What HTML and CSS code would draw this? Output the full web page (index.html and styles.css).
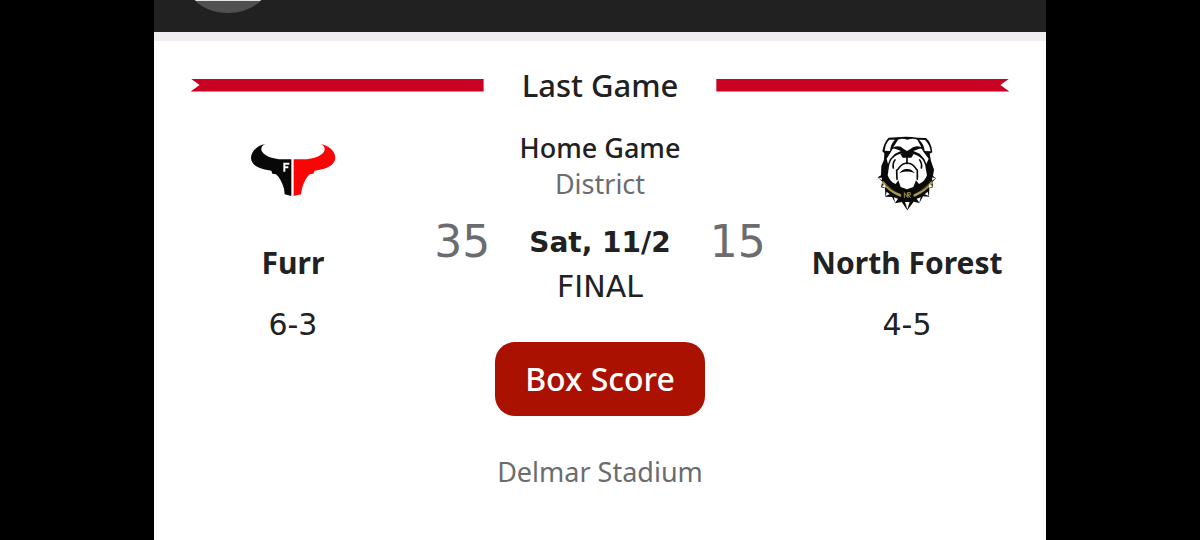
FILE: index.html
```html
<!DOCTYPE html>
<html lang="en">
<head>
<meta charset="utf-8">
<meta name="viewport" content="width=device-width, initial-scale=1">
<title>Last Game</title>
<link rel="stylesheet" href="styles.css">
</head>
<body>
<div class="screen">
  <header class="topbar">
    <svg class="avatar" viewBox="0 0 80 14" aria-hidden="true">
      <path d="M4 0Q18 13 38 13Q58 13 72 0Z" fill="#505050"/>
      <path d="M5 0H71L70 1H6Z" fill="#e4e6e6"/>
    </svg>
  </header>
  <main class="card">
    <div class="heading">
      <span class="ribbon ribbon-left"></span>
      <h1 class="title">Last Game</h1>
      <span class="ribbon ribbon-right"></span>
    </div>
    <div class="matchup">
      <section class="team">
        <svg class="logo" viewBox="0 0 330 285" role="img" aria-label="Furr logo">
          <g transform="translate(2 15)">
            <path d="M81 42C58 45 37 62 37 84C38 108 66 118 98 122L101 131L112 133C124 143 130 158 136 176L138 193L158 198V88H132C100 88 73 76 68 60C67 51 72 45 81 42Z" fill="#080808"/>
            <path d="M245 42C269 46 290 62 290 84C288 108 260 118 228 122L224 131L213 133C202 143 195 158 190 176L187 193L165 198V88H194C226 88 254 76 258 60C259 51 254 45 245 42Z" fill="#fa0505"/>
            <path d="M137 125V101H152M137 112H149" fill="none" stroke="#fff" stroke-width="6"/>
          </g>
        </svg>
        <h2 class="name">Furr</h2>
        <p class="record">6-3</p>
      </section>
      <section class="game">
        <p class="place">Home Game</p>
        <p class="kind">District</p>
        <div class="result">
          <span class="score">35</span>
          <span class="date">Sat, 11/2</span>
          <span class="score">15</span>
        </div>
        <p class="status">FINAL</p>
        <button class="box-score" type="button">Box Score</button>
        <p class="stadium">Delmar Stadium</p>
      </section>
      <section class="team">
        <svg class="logo" viewBox="0 0 270 285" role="img" aria-label="North Forest bulldog logo">
          <g stroke-linejoin="round" stroke-linecap="round">
            <path d="M80 38L105 37Q135 33 166 38L192 39Q208 52 211 82L203 86L207 108L216 134L213 153L222 160L212 170L213 187L202 190L201 215L183 214L172 234L155 230L136 256L119 231L100 235L90 216L70 215L69 190L57 187L61 170L47 157L57 151L58 123L66 104L67 85L61 79Q66 51 80 38Z" fill="#0a0a0a"/>
            <path d="M82 44L99 44Q86 56 84 78L68 77Q70 56 82 44ZM189 45L171 44Q186 57 188 78L206 79Q203 58 189 45Z" fill="#fff"/>
            <path d="M108 44Q120 38 136 44Q153 38 166 44L178 66Q158 59 145 72L135 78L124 71Q112 59 94 67Z" fill="#fff"/>
            <path d="M88 79Q91 67 101 72L117 78L99 86L84 102L78 117L74 101ZM183 79Q181 67 170 72L154 78L173 86L187 102L193 117L200 101Z" fill="#fff"/>
            <path d="M135 85Q111 84 99 94Q82 106 80 131L77 151Q84 171 101 177L109 166L116 186L135 193L154 186L162 166L171 177Q188 170 195 151L191 130Q189 106 170 94Q155 84 135 85Z" fill="#fff"/>
            <path d="M115 87Q135 76 155 87L148 98H122Z" fill="#0a0a0a"/>
            <path d="M135 96V115M107 134Q121 112 135 115Q151 112 164 134M99 105Q91 115 94 129M173 105Q181 115 178 129M104 135L105 163M166 135L166 163" fill="none" stroke="#0a0a0a" stroke-width="5"/>
            <path d="M112 145Q122 131 135 132Q148 131 159 145Q147 139 135 140Q124 139 112 145Z" fill="#0a0a0a"/>
            <path d="M63 173Q82 197 114 211M209 173Q188 197 158 211" fill="none" stroke="#a59a4d" stroke-width="8"/>
            <path d="M71 179Q89 198 108 203M201 179Q182 198 163 203" fill="none" stroke="#242009" stroke-width="2"/>
            <path d="M127 218V203L136 216V203M138 218V203H145V210H138L146 218" fill="none" stroke="#9b8e42" stroke-width="3"/>
            <path d="M49 158L60 158L59 166ZM221 160L211 157L210 167ZM59 184L69 178L70 189ZM213 184L202 178L201 189ZM71 213L74 200L83 208ZM200 213L197 200L188 208ZM99 234L96 217L108 221ZM172 233L164 221L176 217ZM129 231H143L136 253Z" fill="#fff"/>
          </g>
        </svg>
        <h2 class="name">North Forest</h2>
        <p class="record">4-5</p>
      </section>
    </div>
  </main>
</div>
</body>
</html>
```
FILE: styles.css
```css
* {
  box-sizing: border-box;
}

body {
  margin: 0;
  background: #000;
  color: #212121;
  font-family: "Noto Sans", "Open Sans", sans-serif;
}

h1,
h2,
p {
  margin: 0;
  white-space: nowrap;
}

.screen {
  width: 74.4%;
  min-height: 100vh;
  margin: 0 auto;
  background: #fff;
}

.topbar {
  height: 32px;
  padding-left: 36px;
  background: #212121;
}

.avatar {
  display: block;
  width: 80px;
  height: 14px;
}

.card {
  padding: 20px 37px 0;
  border-top: 9px solid #efedf1;
}

.heading {
  display: grid;
  grid-template-columns: 1fr auto 1fr;
  align-items: center;
  column-gap: 38px;
}

.title {
  font-size: 31px;
  font-weight: 500;
  line-height: 48px;
}

.ribbon {
  height: 13px;
  background: #cc0022;
}

.ribbon-left {
  clip-path: polygon(0 0, 100% 0, 100% 100%, 0 100%, 9px 50%);
}

.ribbon-right {
  clip-path: polygon(0 0, 100% 0, calc(100% - 9px) 50%, 100% 100%, 0 100%);
}

.matchup {
  display: grid;
  grid-template-columns: 1fr 2fr 1fr;
  padding-top: 16px;
}

.team,
.game {
  display: flex;
  flex-direction: column;
  align-items: center;
  min-width: 0;
}

.game {
  padding-top: 5px;
}

.logo {
  width: 110px;
  height: 95px;
}

.name {
  margin-top: 21px;
  font-size: 30px;
  font-weight: 700;
  line-height: 44px;
}

.record {
  margin-top: 20px;
  font-family: "DejaVu Sans", sans-serif;
  font-size: 30px;
  line-height: 40px;
}

.place {
  font-size: 27px;
  font-weight: 500;
  line-height: 36px;
}

.kind {
  color: #6b6c6f;
  font-size: 27px;
  line-height: 36px;
}

.result {
  display: grid;
  grid-template-columns: 1fr auto 1fr;
  align-items: center;
  align-self: stretch;
  margin-top: 10px;
  text-align: center;
}

.score {
  color: #6b6c6f;
  font-family: "DejaVu Sans", sans-serif;
  font-size: 44px;
  line-height: 60px;
}

.date {
  font-family: "DejaVu Sans", sans-serif;
  font-size: 28px;
  font-weight: 700;
}

.status {
  font-family: "DejaVu Sans", sans-serif;
  font-size: 30px;
  line-height: 30px;
}

.box-score {
  margin-top: 40px;
  padding: 14px 30px;
  border: 0;
  border-radius: 20px;
  background: #aa1100;
  color: #fff;
  font: 500 32px/46px "Noto Sans", "Open Sans", sans-serif;
}

.stadium {
  margin-top: 36px;
  color: #6b6c6f;
  font-size: 27px;
  line-height: 40px;
}
```
